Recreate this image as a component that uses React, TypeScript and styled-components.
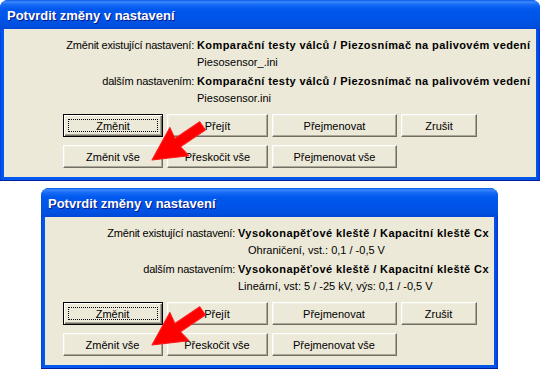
import React from "react";
import styled, { createGlobalStyle } from "styled-components";

const Global = createGlobalStyle`
  html, body { margin: 0; padding: 0; background: #ffffff; }
  body { font-family: "Liberation Sans", Arial, sans-serif; }
`;

const Page = styled.div`
  position: relative;
  width: 540px;
  height: 369px;
  overflow: hidden;
  display: flex;
  flex-direction: column;
  gap: 7px;
  background: #ffffff;
`;

const Window = styled.div<{ $left: number; $width: number }>`
  margin-left: ${(p) => p.$left}px;
  width: ${(p) => p.$width}px;
  height: 181px;
  flex: none;
  display: flex;
  flex-direction: column;
  border-radius: 8px 8px 0 0;
  background: linear-gradient(90deg, #0831d9 0, #0055e5 1px, #0058ee 3px, #0055e5 calc(100% - 3px), #0831d9 100%);
  box-shadow: inset 0 -1px 0 #001ea0;
  overflow: hidden;
`;

const TitleBar = styled.div`
  height: 29px;
  flex: none;
  display: flex;
  align-items: center;
  padding-left: 7px;
  padding-top: 1px;
  box-sizing: border-box;
  background: linear-gradient(
    180deg,
    #0a5ae8 0,
    #3d8bff 2px,
    #1a6ef5 4px,
    #0058ee 9px,
    #0054e8 18px,
    #0050e0 25px,
    #0046d8 29px
  );
  color: #ffffff;
  font-weight: bold;
  font-size: 13px;
  text-shadow: 1px 1px 0 #0a1883;
`;

const Body = styled.div`
  flex: 1;
  margin: 0 4px 4px 4px;
  background: #ece9d8;
  padding: 8px 0 9px 0;
  display: flex;
  flex-direction: column;
  gap: 8px;
  font-size: 11px;
  color: #000000;
`;

const InfoGrid = styled.div`
  display: grid;
  grid-template-columns: 190px auto;
  column-gap: 3px;
  row-gap: 1px;
`;

const Label = styled.div<{ $gapTop?: boolean }>`
  text-align: right;
  line-height: 16px;
  white-space: nowrap;
  letter-spacing: -0.2px;
  margin-top: ${(p) => (p.$gapTop ? 2 : 0)}px;
`;

const Value = styled.div<{ $bold?: boolean; $gapTop?: boolean; $indent?: number }>`
  line-height: 16px;
  white-space: nowrap;
  font-weight: ${(p) => (p.$bold ? "bold" : "normal")};
  letter-spacing: ${(p) => (p.$bold ? "0.42px" : "0")};
  margin-top: ${(p) => (p.$gapTop ? 2 : 0)}px;
  padding-left: ${(p) => p.$indent ?? 0}px;
`;

const ButtonGrid = styled.div`
  display: grid;
  grid-template-columns: 100px 101px 125px 76px;
  grid-auto-rows: 23px;
  column-gap: 4px;
  row-gap: 8px;
  justify-content: center;
`;

const Button = styled.div<{ $default?: boolean }>`
  position: relative;
  box-sizing: border-box;
  display: flex;
  align-items: center;
  justify-content: center;
  font-size: 11px;
  background: #ece9d8;
  border: 1px solid;
  border-color: ${(p) => (p.$default ? "#000000" : "#ffffff #716f64 #716f64 #ffffff")};
  box-shadow: ${(p) =>
    p.$default
      ? "inset 1px 1px 0 #ffffff, inset -1px -1px 0 #716f64, inset -2px -2px 0 #aca899"
      : "inset -1px -1px 0 #aca899, inset 1px 1px 0 #f1efe2"};
`;

const Focus = styled.span`
  position: absolute;
  inset: 4px;
  border: 1px dotted #000000;
`;

const Arrow = styled.svg`
  position: absolute;
  left: 0;
  top: 0;
  pointer-events: none;
`;

type Info = {
  label: string;
  value: string;
  sub: string;
  subIndent?: number;
};

function Dialog({ left, width, rows }: { left: number; width: number; rows: Info[] }) {
  return (
    <Window $left={left} $width={width}>
      <TitleBar>Potvrdit změny v nastavení</TitleBar>
      <Body>
        <InfoGrid>
          {rows.map((r, i) => (
            <React.Fragment key={i}>
              <Label $gapTop={i > 0}>{r.label}</Label>
              <Value $bold $gapTop={i > 0}>
                {r.value}
              </Value>
              <div />
              <Value $indent={r.subIndent}>{r.sub}</Value>
            </React.Fragment>
          ))}
        </InfoGrid>
        <ButtonGrid>
          <Button $default>
            <Focus />
            Změnit
          </Button>
          <Button>Přejít</Button>
          <Button>Přejmenovat</Button>
          <Button>Zrušit</Button>
          <Button>Změnit vše</Button>
          <Button>Přeskočit vše</Button>
          <Button>Přejmenovat vše</Button>
        </ButtonGrid>
      </Body>
    </Window>
  );
}

function RedArrow({ x, y }: { x: number; y: number }) {
  return (
    <g transform={`translate(${x},${y}) rotate(-34)`}>
      <polygon
        points="0,0 33,-17 31,-5 61,-5 61,5 31,5 33,17"
        fill="#ff0000"
        stroke="#ff1a1a"
        strokeWidth="1"
        strokeLinejoin="round"
      />
    </g>
  );
}

export default function App() {
  const first: Info[] = [
    {
      label: "Změnit existující nastavení:",
      value: "Komparační testy válců / Piezosnímač na palivovém vedení",
      sub: "Piesosensor_.ini",
    },
    {
      label: "dalším nastavením:",
      value: "Komparační testy válců / Piezosnímač na palivovém vedení",
      sub: "Piesosensor.ini",
    },
  ];
  const second: Info[] = [
    {
      label: "Změnit existující nastavení:",
      value: "Vysokonapěťové kleště / Kapacitní kleště Cx",
      sub: "Ohraničení, vst.: 0,1 / -0,5 V",
      subIndent: 10,
    },
    {
      label: "dalším nastavením:",
      value: "Vysokonapěťové kleště / Kapacitní kleště Cx",
      sub: "Lineární, vst: 5 / -25 kV, výs: 0,1 / -0,5 V",
    },
  ];
  return (
    <>
      <Global />
      <Page>
        <Dialog left={0} width={540} rows={first} />
        <Dialog left={41} width={457} rows={second} />
        <Arrow width={540} height={369} viewBox="0 0 540 369">
          <RedArrow x={152} y={160} />
          <RedArrow x={152} y={345} />
        </Arrow>
      </Page>
    </>
  );
}
